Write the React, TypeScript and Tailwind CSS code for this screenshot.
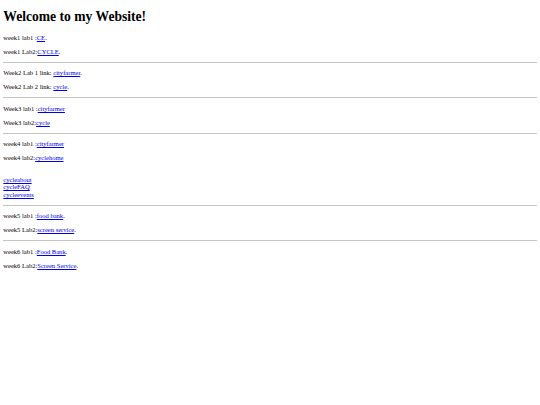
import React from 'react'

const linkCls = 'text-[#0000ee] underline'

function Line({ label, link, dot }: { label: string; link: string; dot?: boolean }) {
    return (
        <p className="my-[6.5px]">
            {label}
            <a href="#" className={linkCls}>{link}</a>
            {dot ? '.' : ''}
        </p>
    )
}

function Rule() {
    return <hr className="my-[3.3px] border-t border-[#c6c6c6]" />
}

export default function App() {
    return (
        <div className="min-h-screen bg-white text-black px-[3.3px] pb-[3.3px] font-['Liberation_Serif',serif] text-[6.56px] leading-[7.5px] flow-root">
            <h1 className="mt-[9px] mb-[9.4px] text-[13.6px] leading-[15.6px] font-bold">Welcome to my Website!</h1>

            <Line label="week1 lab1 :" link="CE" dot />
            <Line label="week1 Lab2:" link="CYCLE" dot />
            <Rule />

            <Line label="Week2 Lab 1 link: " link="cityfarmer" dot />
            <Line label="Week2 Lab 2 link: " link="cycle" dot />
            <Rule />

            <Line label="Week3 lab1 :" link="cityfarmer" />
            <Line label="Week3 lab2:" link="cycle" />
            <Rule />

            <Line label="week4 lab1 :" link="cityfarmer" />
            <Line label="week4 lab2:" link="cyclehome" />
            <p className="my-[6.5px]">
                <br />
                <a href="#" className={linkCls}>cycleabout</a>
                <br />
                <a href="#" className={linkCls}>cycleFAQ</a>
                <br />
                <a href="#" className={linkCls}>cycleevents</a>
            </p>
            <Rule />

            <Line label="week5 lab1 :" link="food bank" dot />
            <Line label="week5 Lab2:" link="screen service" dot />
            <Rule />

            <Line label="week6 lab1 :" link="Food Bank" dot />
            <Line label="week6 Lab2:" link="Screen Service" dot />
        </div>
    )
}
